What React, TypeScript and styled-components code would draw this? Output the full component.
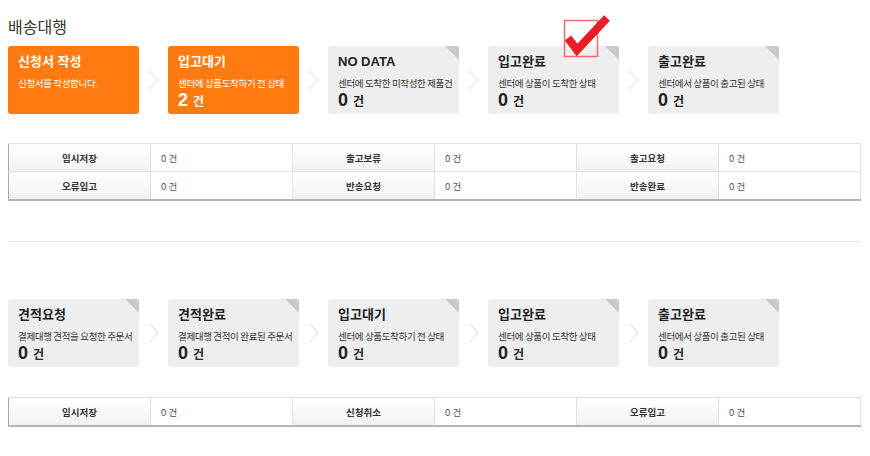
import React from "react";
import styled, { createGlobalStyle, css } from "styled-components";

const Global = createGlobalStyle`
  body {
    margin: 8px;
    background: #ffffff;
    font-family: "Liberation Sans", "Noto Sans CJK KR", sans-serif;
    color: #333;
  }
`;

const Page = styled.div`
  width: 853px;
  display: flex;
  flex-direction: column;
`;

const Title = styled.h2`
  margin: 6px 0 0;
  font-size: 16px;
  line-height: 24px;
  font-weight: normal;
  color: #333;
  font-family: "Noto Sans CJK KR", sans-serif;
`;

const CardRow = styled.div<{ $top: number }>`
  display: flex;
  align-items: center;
  margin-top: ${(p) => p.$top}px;
`;

const Card = styled.div<{ $active?: boolean }>`
  position: relative;
  width: 131px;
  height: 68px;
  box-sizing: border-box;
  padding: 7px 0 0 10px;
  border-radius: 3px;
  background: ${(p) => (p.$active ? "#ff7b11" : "#eeeeee")};
  color: ${(p) => (p.$active ? "#ffffff" : "#222")};
  overflow: visible;
  ${(p) =>
    !p.$active &&
    css`
      &::after {
        content: "";
        position: absolute;
        top: 0;
        right: 0;
        width: 0;
        height: 0;
        border-top: 14px solid #c9c9c9;
        border-left: 14px solid transparent;
        border-top-right-radius: 3px;
      }
    `}
`;

const CardTitle = styled.div`
  font-size: 13px;
  line-height: 18px;
  font-weight: bold;
  font-family: "Liberation Sans", "Noto Sans CJK KR", sans-serif;
`;

const CardDesc = styled.div<{ $active?: boolean }>`
  margin-top: 5px;
  font-size: 9.5px;
  line-height: 14px;
  letter-spacing: -0.35px;
  color: ${(p) => (p.$active ? "#fff" : "#333")};
  font-family: "Noto Sans CJK KR", sans-serif;
  white-space: nowrap;
`;

const Count = styled.div`
  display: flex;
  align-items: baseline;
  gap: 5px;
  line-height: 20px;
`;

const Num = styled.span`
  font-size: 18px;
  font-weight: bold;
  font-family: "Liberation Sans", sans-serif;
`;

const Unit = styled.span`
  font-size: 12px;
  font-weight: bold;
  font-family: "Noto Sans CJK KR", sans-serif;
`;

const Arrow = styled.div`
  width: 29px;
  display: flex;
  justify-content: center;
  align-items: center;
`;

const Check = styled.svg`
  position: absolute;
  left: 68px;
  top: -34px;
  width: 60px;
  height: 50px;
  z-index: 2;
`;

const Table = styled.table<{ $top: number }>`
  width: 853px;
  border-collapse: collapse;
  table-layout: fixed;
  border: 1px solid #a9a9a9;
  border-bottom: 2px solid #b4b4b4;
  font-family: "Noto Sans CJK KR", sans-serif;
  font-size: 9.5px;
  margin-top: ${(p) => p.$top}px;
`;

const Th = styled.th`
  height: 27px;
  padding: 0;
  text-align: center;
  font-weight: bold;
  color: #333;
  background: linear-gradient(#ffffff, #f1f1f1);
  border: 1px solid #e2e2e2;
  border-left: none;
`;

const Td = styled.td`
  height: 27px;
  padding: 0 0 0 10px;
  color: #555;
  background: #fff;
  border: 1px solid #e2e2e2;
`;

const Divider = styled.hr`
  margin: 40px 0 0;
  border: none;
  border-top: 1px solid #e6e6e6;
  width: 853px;
`;

type CardData = { title: string; desc: string; count?: number; active?: boolean; check?: boolean };

const Chevron = () => (
  <Arrow>
    <svg width="10" height="20" viewBox="0 0 10 20">
      <polyline points="1,1 9,10 1,19" fill="none" stroke="#dcdcdc" strokeWidth="1" />
    </svg>
  </Arrow>
);

const Cards = ({ items, top }: { items: CardData[]; top: number }) => (
  <CardRow $top={top}>
    {items.map((c, i) => (
      <React.Fragment key={i}>
        {i > 0 && <Chevron />}
        <Card $active={c.active}>
          <CardTitle>{c.title}</CardTitle>
          <CardDesc $active={c.active}>{c.desc}</CardDesc>
          {c.count !== undefined && (
            <Count>
              <Num>{c.count}</Num>
              <Unit>건</Unit>
            </Count>
          )}
          {c.check && (
            <Check viewBox="0 0 60 50">
              <rect x="8.5" y="8.5" width="33" height="36" fill="none" stroke="#ef6b72" strokeWidth="1.5" />
              <polyline points="12,26 21,38 51,6" fill="none" stroke="#ea1c26" strokeWidth="8" strokeLinejoin="miter" />
            </Check>
          )}
        </Card>
      </React.Fragment>
    ))}
  </CardRow>
);

const StatTable = ({ rows, top }: { rows: [string, string][][]; top: number }) => (
  <Table $top={top}>
    <tbody>
      {rows.map((r, i) => (
        <tr key={i}>
          {r.map(([k, v], j) => (
            <React.Fragment key={j}>
              <Th>{k}</Th>
              <Td>{v}</Td>
            </React.Fragment>
          ))}
        </tr>
      ))}
    </tbody>
  </Table>
);

const top: CardData[] = [
  { title: "신청서 작성", desc: "신청서를 작성합니다.", active: true },
  { title: "입고대기", desc: "센터에 상품도착하기 전 상태", count: 2, active: true },
  { title: "NO DATA", desc: "센터에 도착한 미작성한 제품건", count: 0 },
  { title: "입고완료", desc: "센터에 상품이 도착한 상태", count: 0, check: true },
  { title: "출고완료", desc: "센터에서 상품이 출고된 상태", count: 0 },
];

const bottom: CardData[] = [
  { title: "견적요청", desc: "결제대행 견적을 요청한 주문서", count: 0 },
  { title: "견적완료", desc: "결제대행 견적이 완료된 주문서", count: 0 },
  { title: "입고대기", desc: "센터에 상품도착하기 전 상태", count: 0 },
  { title: "입고완료", desc: "센터에 상품이 도착한 상태", count: 0 },
  { title: "출고완료", desc: "센터에서 상품이 출고된 상태", count: 0 },
];

export default function App() {
  return (
    <>
      <Global />
      <Page>
        <Title>배송대행</Title>
        <Cards items={top} top={8} />
        <StatTable
          top={29}
          rows={[
            [["임시저장", "0 건"], ["출고보류", "0 건"], ["출고요청", "0 건"]],
            [["오류입고", "0 건"], ["반송요청", "0 건"], ["반송완료", "0 건"]],
          ]}
        />
        <Divider />
        <Cards items={bottom} top={57} />
        <StatTable top={30} rows={[[["임시저장", "0 건"], ["신청취소", "0 건"], ["오류입고", "0 건"]]]} />
      </Page>
    </>
  );
}
